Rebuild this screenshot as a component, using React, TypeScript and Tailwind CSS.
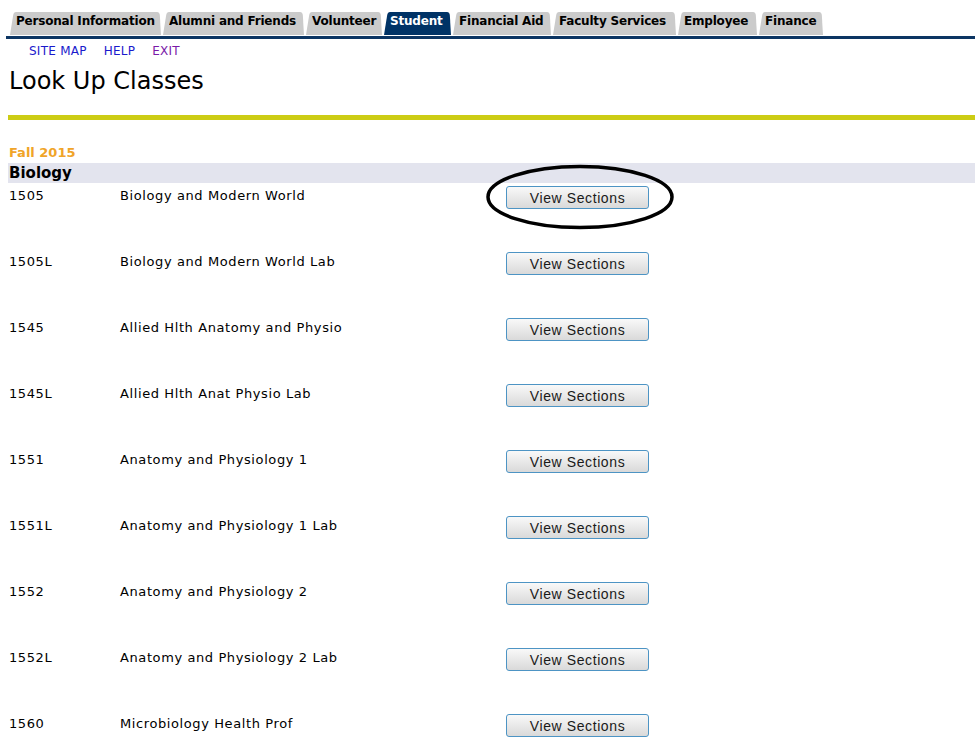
import React from "react";

const tabs: [string, number][] = [
  ["Personal Information", 151],
  ["Alumni and Friends", 141],
  ["Volunteer", 76],
  ["Student", 67],
  ["Financial Aid", 98],
  ["Faculty Services", 123],
  ["Employee", 79],
  ["Finance", 64],
];

const rows: [string, string][] = [
  ["1505", "Biology and Modern World"],
  ["1505L", "Biology and Modern World Lab"],
  ["1545", "Allied Hlth Anatomy and Physio"],
  ["1545L", "Allied Hlth Anat Physio Lab"],
  ["1551", "Anatomy and Physiology 1"],
  ["1551L", "Anatomy and Physiology 1 Lab"],
  ["1552", "Anatomy and Physiology 2"],
  ["1552L", "Anatomy and Physiology 2 Lab"],
  ["1560", "Microbiology Health Prof"],
];

function Tab({ label, width, active }: { label: string; width: number; active: boolean }) {
  const fill = active ? "#003366" : "#cbcbcb";
  return (
    <div className="flex h-[23px] items-stretch" style={{ width }}>
      <svg width="6" height="23" viewBox="0 0 6 23" className="block shrink-0">
        <path d="M0 23 L3.2 3 Q3.8 0 6 0 L6 23 Z" fill={fill} />
      </svg>
      <span
        className={
          "flex flex-1 items-start overflow-hidden whitespace-nowrap pt-[2px] text-[12px] font-bold leading-[14px] tracking-[-0.2px] " +
          (active ? "bg-[#003366] text-white" : "bg-[#cbcbcb] text-black")
        }
      >
        {label}
      </span>
      <svg width="5" height="23" viewBox="0 0 5 23" className="block shrink-0">
        <path d="M0 0 L1 0 Q3.4 0 3.8 3 L5 23 L0 23 Z" fill={fill} />
      </svg>
    </div>
  );
}

function ViewButton({ circled }: { circled?: boolean }) {
  return (
    <span className="relative inline-block">
      <button className="flex h-[23px] w-[143px] items-center justify-center rounded-[3px] border border-[#4d94c4] bg-linear-to-b from-[#f9f9f9] to-[#d9d9d9] text-[14px] leading-none tracking-[0.6px] text-[#1a1a1a] [font-family:'Liberation_Sans',Arial,sans-serif]">
        View Sections
      </button>
      {circled && (
        <svg
          width="190"
          height="66"
          viewBox="0 0 190 66"
          className="pointer-events-none absolute left-[-21px] top-[-22px]"
        >
          <ellipse cx="95" cy="33" rx="92" ry="30.5" fill="none" stroke="#000" strokeWidth="3.5" />
        </svg>
      )}
    </span>
  );
}

export default function App() {
  return (
    <div className="min-h-[753px] bg-white text-black [font-family:'DejaVu_Sans',Verdana,sans-serif]">
      {/* tabs */}
      <div className="pt-[12px] pl-[6px]">
        <div className="flex gap-[2px] pl-[4px]">
          {tabs.map(([t, w]) => (
            <Tab key={t} label={t} width={w} active={t === "Student"} />
          ))}
        </div>
        <div className="mt-[1px] h-[3px] bg-[#0c3563]" />
      </div>

      {/* links */}
      <div className="flex gap-[17px] pl-[29px] pt-[5px] text-[12px] leading-[14px] tracking-[0.25px]">
        <a className="text-[#1a1acc]">SITE MAP</a>
        <a className="text-[#1a1acc]">HELP</a>
        <a className="text-[#7a1aa8]">EXIT</a>
      </div>

      {/* title */}
      <h1 className="pl-[9px] pt-[8px] text-[24px] font-normal leading-[30px]">Look Up Classes</h1>

      <div className="ml-[8px] mt-[19px] h-[5px] bg-[#cccc14]" />

      <div className="pl-[9px] pt-[25px] text-[13px] font-bold leading-[16px] text-[#f0a428]">Fall 2015</div>

      <div className="ml-[8px] mt-[2px] flex h-[20px] items-center bg-[#e3e4ee] pl-[1px] text-[15px] font-bold leading-none">
        Biology
      </div>

      <div className="pl-[9px]">
        {rows.map(([code, title], i) => (
          <div key={code} className="flex h-[66px] items-start pt-[3px] text-[13px] leading-[16px] tracking-[0.6px]">
            <div className="w-[111px] pt-[2px]">{code}</div>
            <div className="w-[386px] pt-[2px]">{title}</div>
            <ViewButton circled={i === 0} />
          </div>
        ))}
      </div>
    </div>
  );
}
